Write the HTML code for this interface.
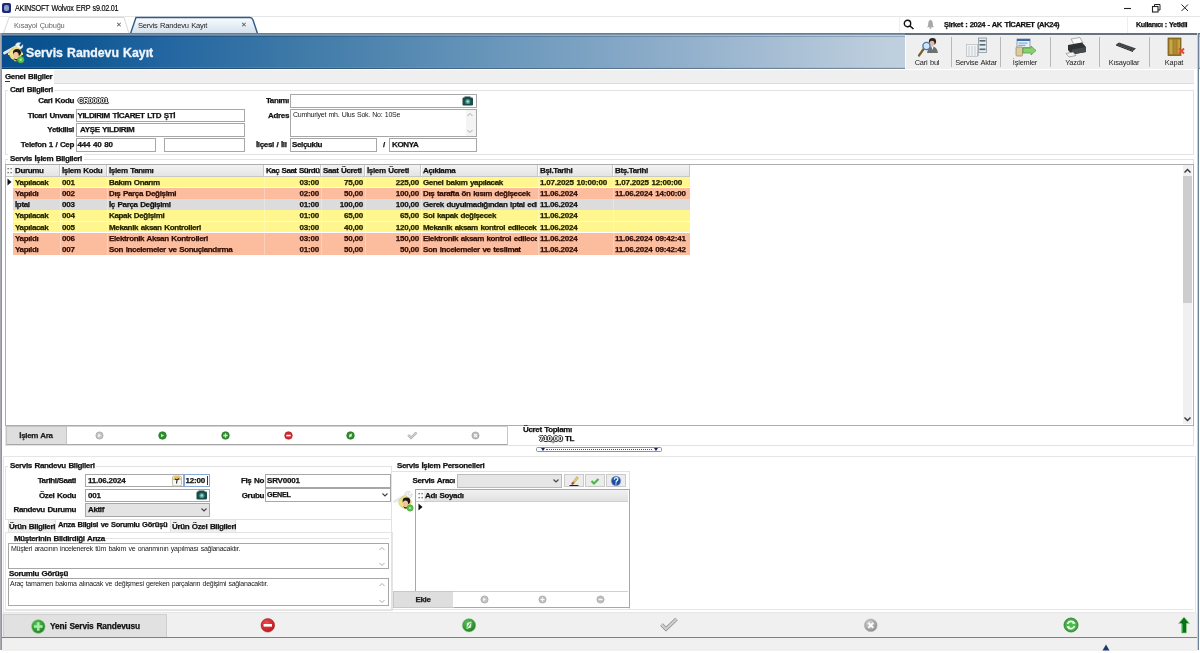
<!DOCTYPE html><html><head><meta charset="utf-8"><style>
html,body{margin:0;padding:0;width:1200px;height:653px;overflow:hidden;background:#fff;}
body{position:relative;font-family:"Liberation Sans", sans-serif;}
#root{position:absolute;left:0;top:0;width:1200px;height:653px;will-change:transform;}
.t{position:absolute;white-space:nowrap;font-weight:bold;letter-spacing:-0.35px;-webkit-text-stroke:0.25px currentColor;word-spacing:0.7px;}
div{box-sizing:content-box;}
</style></head><body><div id="root">
<div style="position:absolute;left:0px;top:0px;width:1200px;height:16px;background:#fff;"></div>
<div style="position:absolute;left:2px;top:3px;width:9px;height:10px;background:#1c2a6e;border-radius:2px;"></div>
<div style="position:absolute;left:4px;top:5px;width:5px;height:6px;background:#8c9ad0;border-radius:2px;"></div>
<div class="t" style="left:14.5px;top:2.9000000000000004px;height:12px;line-height:12px;font-size:8.2px;color:#000;font-weight:normal;-webkit-text-stroke:0;letter-spacing:-0.25px;transform:scaleX(0.88);transform-origin:0 0;-webkit-text-stroke:0.15px #000;">AKINSOFT Wolvox ERP s9.02.01</div>
<svg style="position:absolute;left:1120px;top:2px" width="75" height="12"><line x1="4" y1="6.5" x2="11" y2="6.5" stroke="#222" stroke-width="1.1"/><rect x="32.5" y="4.5" width="5.5" height="5.5" fill="none" stroke="#222" stroke-width="1.1"/><path d="M34.5 4.5 V2.5 H40 V8 H38" fill="none" stroke="#222" stroke-width="1"/><path d="M61.5 2.5 L68 9 M68 2.5 L61.5 9" stroke="#222" stroke-width="1"/></svg>
<div style="position:absolute;left:0px;top:16px;width:1200px;height:17px;background:#fff;"></div>
<div style="position:absolute;left:0px;top:16px;width:1200px;height:1px;background:#e6e6e6;"></div>
<svg style="position:absolute;left:0;top:16px" width="270" height="18"><path d="M3.5 17.5 L9 1.5 L124 1.5 L129 17.5" fill="#fff" stroke="#d8d8d8"/><defs><linearGradient id="tabg" x1="0" y1="0" x2="0" y2="1"><stop offset="0" stop-color="#fafcfe"/><stop offset="1" stop-color="#d4e0ec"/></linearGradient></defs><path d="M130.5 17.5 L136 1.5 L250 1.5 Q252 1.5 253 4 L257.5 17.5" fill="url(#tabg)" stroke="#2f5b86" stroke-width="1.4"/></svg>
<div class="t" style="left:13.5px;top:19.9px;height:12px;line-height:12px;font-size:8px;color:#666;font-weight:normal;-webkit-text-stroke:0;letter-spacing:-0.2px;transform:scaleX(0.93);transform-origin:0 0;">Kısayol Çubuğu</div>
<div class="t" style="left:19px;width:200px;text-align:center;top:19.4px;height:12px;line-height:12px;font-size:7px;color:#444;font-weight:normal;-webkit-text-stroke:0;">&#10005;</div>
<div class="t" style="left:138px;top:19.9px;height:12px;line-height:12px;font-size:8px;color:#222;font-weight:normal;-webkit-text-stroke:0;letter-spacing:-0.25px;transform:scaleX(0.944);transform-origin:0 0;">Servis Randevu Kayıt</div>
<div class="t" style="left:144px;width:200px;text-align:center;top:19.4px;height:12px;line-height:12px;font-size:7px;color:#444;font-weight:normal;-webkit-text-stroke:0;">&#10005;</div>
<div style="position:absolute;left:899px;top:17px;width:1px;height:16px;background:#eee;"></div>
<svg style="position:absolute;left:903px;top:19px" width="13" height="11"><circle cx="4.5" cy="4.5" r="3.2" fill="none" stroke="#111" stroke-width="1.4"/><line x1="7" y1="7" x2="10.5" y2="10" stroke="#111" stroke-width="1.6"/></svg>
<svg style="position:absolute;left:926px;top:19px" width="9" height="10"><path d="M4.5 0.8 Q6.8 1.5 6.8 4.5 L7 7 L8.2 8.2 L0.8 8.2 L2 7 L2.2 4.5 Q2.2 1.5 4.5 0.8Z" fill="#a8a8a8"/><circle cx="4.5" cy="9" r="0.9" fill="#a8a8a8"/></svg>
<div class="t" style="left:944px;top:18.9px;height:12px;line-height:12px;font-size:7.6px;color:#111;letter-spacing:-0.39px;">Şirket : 2024 - AK TİCARET (AK24)</div>
<div style="position:absolute;left:1127px;top:17px;width:1px;height:16px;background:#eee;"></div>
<div class="t" style="left:1136px;top:18.9px;height:12px;line-height:12px;font-size:7.2px;color:#111;letter-spacing:-0.38px;">Kullanıcı : Yetkili</div>
<div style="position:absolute;left:0px;top:33px;width:1200px;height:1px;background:#6a7d90;"></div>
<div style="position:absolute;left:0px;top:34px;width:1200px;height:1px;background:#7893ac;"></div>
<div style="position:absolute;left:0px;top:35px;width:1200px;height:34px;background:linear-gradient(to right,#084e8e 0px,#0c5590 62px,#2265a0 160px,#3f7aa8 300px,#6a97bb 500px,#95b2cd 700px,#bdcedd 882px,#c0d0df 905px);"></div>
<div style="position:absolute;left:0px;top:35px;width:1200px;height:1px;background:rgba(200,220,240,0.25);"></div>
<div style="position:absolute;left:0px;top:36px;width:1200px;height:1px;background:rgba(0,10,40,0.2);"></div>
<div style="position:absolute;left:0px;top:67px;width:1200px;height:1px;background:rgba(150,160,170,0.25);"></div>
<div style="position:absolute;left:0px;top:68px;width:1200px;height:1px;background:rgba(20,40,60,0.4);"></div>
<svg style="position:absolute;left:3px;top:42px" width="24" height="23"><path d="M1.5 11 L15 3.5" stroke="#e4eaee" stroke-width="2.8" stroke-linecap="round"/>
<path d="M12.5 2.5 Q14 -0.5 18 0.8 L16 3.2 L17.5 4.8 L19.8 2.5 Q20.8 5.8 18 7 Q15.5 7.5 13.5 6 Z" fill="#eef2f4" stroke="#a8b4bc" stroke-width="0.4"/>
<circle cx="12.5" cy="11.8" r="6.2" fill="#efe08a" stroke="#c8b050" stroke-width="0.5"/>
<g fill="#efe08a"><rect x="11.3" y="4.4" width="2.4" height="2.4"/><rect x="5" y="10.6" width="2.4" height="2.4"/><rect x="17.6" y="10.6" width="2.4" height="2.4"/><rect x="11.3" y="16.8" width="2.4" height="2.4"/></g>
<ellipse cx="14" cy="10.5" rx="4" ry="3.6" fill="#1e1812"/>
<ellipse cx="13" cy="13" rx="2.7" ry="3.1" fill="#f0c4a0"/>
<path d="M10.5 15.5 Q12 18 15 16.5 L14 18.5 Q11.5 19 10.5 15.5Z" fill="#2a2018"/>
<circle cx="17.8" cy="17.8" r="3.3" fill="#56c04a" stroke="#3a9a30" stroke-width="0.5"/><circle cx="17.8" cy="17.8" r="1.2" fill="#a8e89a"/></svg>
<div class="t" style="left:26px;top:46.9px;height:12px;line-height:12px;font-size:12.3px;color:#f0f6ff;letter-spacing:0;-webkit-text-stroke:0.3px #f0f6ff;">Servis Randevu Kayıt</div>
<div style="position:absolute;left:905px;top:35px;width:292px;height:34px;background:#efefef;"></div>
<div style="position:absolute;left:905px;top:33px;width:293px;height:2px;background:#66727f;"></div>
<div style="position:absolute;left:905px;top:35px;width:1px;height:34px;background:#fafafa;"></div>
<div style="position:absolute;left:951px;top:37px;width:1px;height:30px;background:#b9b9b9;"></div>
<div style="position:absolute;left:1000px;top:37px;width:1px;height:30px;background:#b9b9b9;"></div>
<div style="position:absolute;left:1050px;top:37px;width:1px;height:30px;background:#b9b9b9;"></div>
<div style="position:absolute;left:1099px;top:37px;width:1px;height:30px;background:#b9b9b9;"></div>
<div style="position:absolute;left:1149px;top:37px;width:1px;height:30px;background:#b9b9b9;"></div>
<div class="t" style="left:827px;width:200px;text-align:center;top:56.9px;height:12px;line-height:12px;font-size:7.4px;color:#222;font-weight:normal;-webkit-text-stroke:0;letter-spacing:-0.2px;">Cari bul</div>
<div class="t" style="left:876px;width:200px;text-align:center;top:56.9px;height:12px;line-height:12px;font-size:7.4px;color:#222;font-weight:normal;-webkit-text-stroke:0;letter-spacing:-0.2px;">Servise Aktar</div>
<div class="t" style="left:925px;width:200px;text-align:center;top:56.9px;height:12px;line-height:12px;font-size:7.4px;color:#222;font-weight:normal;-webkit-text-stroke:0;letter-spacing:-0.2px;">İşlemler</div>
<div class="t" style="left:975px;width:200px;text-align:center;top:56.9px;height:12px;line-height:12px;font-size:7.4px;color:#222;font-weight:normal;-webkit-text-stroke:0;letter-spacing:-0.2px;">Yazdır</div>
<div class="t" style="left:1024px;width:200px;text-align:center;top:56.9px;height:12px;line-height:12px;font-size:7.4px;color:#222;font-weight:normal;-webkit-text-stroke:0;letter-spacing:-0.2px;">Kısayollar</div>
<div class="t" style="left:1074px;width:200px;text-align:center;top:56.9px;height:12px;line-height:12px;font-size:7.4px;color:#222;font-weight:normal;-webkit-text-stroke:0;letter-spacing:-0.2px;">Kapat</div>
<svg style="position:absolute;left:913px;top:36px" width="26" height="22"><ellipse cx="19.5" cy="5.5" rx="3.6" ry="3.4" fill="#2a241e"/><ellipse cx="19" cy="7.3" rx="2.4" ry="2.6" fill="#e9b9a0"/>
<path d="M14 17 Q15 10.5 19.5 10.5 Q24 10.5 25 17 Z" fill="#6d716f"/><path d="M18.5 10.8 L19.5 14 L20.5 10.8Z" fill="#fff"/>
<line x1="11" y1="12.5" x2="6" y2="19.5" stroke="#7a6030" stroke-width="2.2" stroke-linecap="round"/>
<circle cx="13.5" cy="10" r="3.6" fill="#cfe4f4" stroke="#4a7ab0" stroke-width="1.4"/></svg>
<svg style="position:absolute;left:963px;top:36px" width="26" height="22"><rect x="3.5" y="8.5" width="11" height="12" fill="#f0f2f4" stroke="#b8c0c8" stroke-width="0.8"/>
<line x1="6" y1="10" x2="6" y2="20" stroke="#c8ccd0"/><line x1="9" y1="10" x2="9" y2="20" stroke="#c8ccd0"/><line x1="12" y1="10" x2="12" y2="20" stroke="#c8ccd0"/>
<rect x="15.5" y="2" width="8" height="14.5" fill="#e4eaee" stroke="#8a969e" stroke-width="0.8"/>
<rect x="16.5" y="4" width="6" height="1.6" fill="#5a6a70"/><rect x="16.5" y="8" width="6" height="1.6" fill="#5a6a70"/><rect x="16.5" y="12.5" width="6" height="1.6" fill="#5a6a70"/>
<line x1="15" y1="16" x2="15" y2="20" stroke="#98a0a8"/></svg>
<svg style="position:absolute;left:1013px;top:36px" width="26" height="22"><rect x="4" y="3" width="13" height="8.5" fill="#e6f0f8" stroke="#7890a8" stroke-width="0.8"/><rect x="4" y="3" width="13" height="2" fill="#3a6ab0"/>
<rect x="5.5" y="6.5" width="9" height="1.2" fill="#8aa8c8"/><rect x="5.5" y="8.8" width="7" height="1.2" fill="#8aa8c8"/>
<rect x="3" y="11" width="6.5" height="9" rx="1" fill="#d8cca0" stroke="#a09060" stroke-width="0.8"/>
<path d="M10 12 L18 12 L18 10 L23 14.5 L18 19 L18 17 L10 17 Z" fill="#8ad070" stroke="#4a9a40" stroke-width="0.7"/></svg>
<svg style="position:absolute;left:1063px;top:36px" width="26" height="22"><path d="M8 3 L17 1.5 L20 7 L11 8.5 Z" fill="#fafafa" stroke="#909090" stroke-width="0.7"/>
<path d="M5 9 L19 6.5 L23 11 L23 16 L9 18.5 L5 14 Z" fill="#2e3236"/><path d="M9 13.5 L23 11 L23 16 L9 18.5Z" fill="#45494e"/>
<path d="M3 17.5 L10 16 L13 19.5 L6 21 Z" fill="#f4f4f4" stroke="#777" stroke-width="0.6"/></svg>
<svg style="position:absolute;left:1112px;top:36px" width="26" height="22"><path d="M4 8.5 L7 6.5 L24 12.5 L21 15 Z" fill="#3c3e42"/><path d="M4 8.5 L21 15 L21 16 L4 9.6Z" fill="#1a1a1c"/>
<path d="M7 8 L21 13" stroke="#6a6e72" stroke-width="0.6" stroke-dasharray="1 1"/></svg>
<svg style="position:absolute;left:1162px;top:36px" width="26" height="22"><rect x="6" y="2" width="13" height="17.5" fill="#9a7a2a" stroke="#6a5010" stroke-width="0.7"/>
<rect x="7.5" y="3.5" width="3" height="14.5" fill="#c8a848"/><rect x="11.5" y="3.5" width="3" height="14.5" fill="#b08a30"/><rect x="15.5" y="3.5" width="2.5" height="14.5" fill="#c8a040"/>
<path d="M17 12.5 L22 17.5 M22 12.5 L17 17.5" stroke="#e04a30" stroke-width="1.8"/></svg>
<div style="position:absolute;left:2px;top:69px;width:1195px;height:584px;background:#fff;"></div>
<div style="position:absolute;left:54px;top:70px;width:1140px;height:13px;background:#efefef;border-bottom:1px solid #dcdcdc;"></div>
<div class="t" style="left:5px;top:71.4px;height:12px;line-height:12px;font-size:8px;color:#111;">Genel Bilgiler</div>
<div style="position:absolute;left:5px;top:80.5px;width:5px;height:0.7px;background:#333;"></div>
<div style="position:absolute;left:5px;top:90px;width:1187px;height:63px;border:1px solid #e2e2e2;"></div>
<div style="position:absolute;left:8px;top:85px;width:46px;height:10px;background:#fff;"></div>
<div class="t" style="left:10px;top:84.4px;height:12px;line-height:12px;font-size:8px;color:#111;">Cari Bilgileri</div>
<div class="t" style="right:1126px;top:95.4px;height:12px;line-height:12px;font-size:8px;color:#111;">Cari Kodu</div>
<div class="t" style="left:78px;top:94.9px;height:12px;line-height:12px;font-size:7.6px;color:#fff;-webkit-text-stroke:0;text-shadow:1px 0 0 #333,-1px 0 0 #333,0 1px 0 #333,0 -1px 0 #333,1px 1px 1px #666;letter-spacing:-0.3px;">CR00001</div>
<div class="t" style="right:1126px;top:109.9px;height:12px;line-height:12px;font-size:8px;color:#111;">Ticari Unvanı</div>
<div style="position:absolute;left:76px;top:109px;width:167px;height:11px;background:#fff;border:1px solid #a7a7a7;"></div>
<div class="t" style="left:77.5px;top:109.9px;height:12px;line-height:12px;font-size:8px;color:#111;">YILDIRIM TİCARET LTD ŞTİ</div>
<div class="t" style="right:1126px;top:124.4px;height:12px;line-height:12px;font-size:8px;color:#111;">Yetkilisi</div>
<div style="position:absolute;left:76px;top:123px;width:167px;height:12px;background:#fff;border:1px solid #a7a7a7;"></div>
<div class="t" style="left:80px;top:123.9px;height:12px;line-height:12px;font-size:8px;color:#111;">AYŞE YILDIRIM</div>
<div class="t" style="right:1126px;top:139.4px;height:12px;line-height:12px;font-size:8px;color:#111;">Telefon 1 / Cep</div>
<div style="position:absolute;left:76px;top:138px;width:78px;height:12px;background:#fff;border:1px solid #a7a7a7;"></div>
<div class="t" style="left:77.5px;top:138.9px;height:12px;line-height:12px;font-size:8px;color:#111;letter-spacing:-0.2px;">444 40 80</div>
<div style="position:absolute;left:164px;top:138px;width:79px;height:12px;background:#fff;border:1px solid #a7a7a7;"></div>
<div class="t" style="right:911px;top:95.4px;height:12px;line-height:12px;font-size:8px;color:#111;">Tanımı</div>
<div style="position:absolute;left:290px;top:94px;width:185px;height:12px;background:#fff;border:1px solid #a7a7a7;"></div>
<svg style="position:absolute;left:462px;top:96px" width="12" height="10"><rect x="0.5" y="1.5" width="10.5" height="8" rx="1.2" fill="#1e4a48"/><rect x="2.5" y="0.5" width="6" height="2" fill="#1e4a48"/><circle cx="5.8" cy="5.5" r="2.6" fill="#3a9a90"/><circle cx="5.8" cy="5.5" r="1.3" fill="#9ad8d0"/></svg>
<div class="t" style="right:911px;top:110.4px;height:12px;line-height:12px;font-size:8px;color:#111;">Adres</div>
<div style="position:absolute;left:290px;top:109px;width:185px;height:26px;background:#fff;border:1px solid #a7a7a7;"></div>
<div class="t" style="left:293px;top:109.4px;height:12px;line-height:12px;font-size:7px;color:#1a1a1a;font-weight:normal;-webkit-text-stroke:0;letter-spacing:-0.27px;">Cumhuriyet mh. Ulus Sok. No: 10Se</div>
<div style="position:absolute;left:466px;top:110px;width:10px;height:26px;background:#f4f4f4;"></div>
<svg style="position:absolute;left:465px;top:111px" width="10" height="25"><path d="M2.5 5 L5 2.5 L7.5 5" fill="none" stroke="#aaa"/><path d="M2.5 19 L5 21.5 L7.5 19" fill="none" stroke="#aaa"/></svg>
<div class="t" style="right:911px;top:139.4px;height:12px;line-height:12px;font-size:8px;color:#111;width:33px;overflow:hidden;">İlçesi / İli</div>
<div style="position:absolute;left:290px;top:138px;width:85px;height:12px;background:#fff;border:1px solid #a7a7a7;"></div>
<div class="t" style="left:292px;top:138.9px;height:12px;line-height:12px;font-size:8px;color:#111;">Selçuklu</div>
<div class="t" style="left:383px;top:139.4px;height:12px;line-height:12px;font-size:8px;color:#111;">/</div>
<div style="position:absolute;left:389px;top:138px;width:86px;height:12px;background:#fff;border:1px solid #a7a7a7;"></div>
<div class="t" style="left:392px;top:138.9px;height:12px;line-height:12px;font-size:8px;color:#111;">KONYA</div>
<div style="position:absolute;left:5px;top:159px;width:1187px;height:285px;border:1px solid #e2e2e2;"></div>
<div style="position:absolute;left:8px;top:154px;width:76px;height:10px;background:#fff;"></div>
<div class="t" style="left:10px;top:153.4px;height:12px;line-height:12px;font-size:8px;color:#111;">Servis İşlem Bilgileri</div>
<div style="position:absolute;left:5px;top:164px;width:1187px;height:260px;border:1px solid #adadad;background:#fff;"></div>
<div style="position:absolute;left:6px;top:165px;width:684px;height:11px;background:linear-gradient(#f3f3f3,#e4e4e4);border-bottom:1px solid #c8c8c8;"></div>
<div style="position:absolute;left:264px;top:165px;width:57px;height:11px;background:#fbfbfb;"></div>
<div style="position:absolute;left:59px;top:165px;width:1px;height:11px;background:#c8c8c8;"></div>
<div style="position:absolute;left:60px;top:165px;width:1px;height:11px;background:#fff;"></div>
<div style="position:absolute;left:106px;top:165px;width:1px;height:11px;background:#c8c8c8;"></div>
<div style="position:absolute;left:107px;top:165px;width:1px;height:11px;background:#fff;"></div>
<div style="position:absolute;left:263px;top:165px;width:1px;height:11px;background:#c8c8c8;"></div>
<div style="position:absolute;left:264px;top:165px;width:1px;height:11px;background:#fff;"></div>
<div style="position:absolute;left:320px;top:165px;width:1px;height:11px;background:#c8c8c8;"></div>
<div style="position:absolute;left:321px;top:165px;width:1px;height:11px;background:#fff;"></div>
<div style="position:absolute;left:364px;top:165px;width:1px;height:11px;background:#c8c8c8;"></div>
<div style="position:absolute;left:365px;top:165px;width:1px;height:11px;background:#fff;"></div>
<div style="position:absolute;left:420px;top:165px;width:1px;height:11px;background:#c8c8c8;"></div>
<div style="position:absolute;left:421px;top:165px;width:1px;height:11px;background:#fff;"></div>
<div style="position:absolute;left:537px;top:165px;width:1px;height:11px;background:#c8c8c8;"></div>
<div style="position:absolute;left:538px;top:165px;width:1px;height:11px;background:#fff;"></div>
<div style="position:absolute;left:612px;top:165px;width:1px;height:11px;background:#c8c8c8;"></div>
<div style="position:absolute;left:613px;top:165px;width:1px;height:11px;background:#fff;"></div>
<div style="position:absolute;left:689px;top:165px;width:1px;height:11px;background:#c8c8c8;"></div>
<div style="position:absolute;left:690px;top:165px;width:1px;height:11px;background:#fff;"></div>
<div style="position:absolute;left:6px;top:165px;width:7px;height:11px;background:#fafafa;"></div>
<svg style="position:absolute;left:7px;top:166.5px" width="6" height="8"><g fill="#666"><rect x="0.5" y="1" width="1.3" height="1.3"/><rect x="3.5" y="1" width="1.3" height="1.3"/><rect x="0.5" y="5" width="1.3" height="1.3"/><rect x="3.5" y="5" width="1.3" height="1.3"/></g></svg>
<div class="t" style="left:15px;top:164.9px;height:12px;line-height:12px;font-size:8px;color:#111;">Durumu</div>
<div class="t" style="left:62px;top:164.9px;height:12px;line-height:12px;font-size:8px;color:#111;">İşlem Kodu</div>
<div class="t" style="left:109px;top:164.9px;height:12px;line-height:12px;font-size:8px;color:#111;">İşlem Tanımı</div>
<div class="t" style="left:266px;top:164.9px;height:12px;line-height:12px;font-size:8px;color:#111;letter-spacing:-0.5px;">Kaç Saat Sürdü</div>
<div class="t" style="left:323px;top:164.9px;height:12px;line-height:12px;font-size:8px;color:#111;">Saat Ücreti</div>
<div class="t" style="left:367px;top:164.9px;height:12px;line-height:12px;font-size:8px;color:#111;">İşlem Ücreti</div>
<div class="t" style="left:423px;top:164.9px;height:12px;line-height:12px;font-size:8px;color:#111;">Açıklama</div>
<div class="t" style="left:540px;top:164.9px;height:12px;line-height:12px;font-size:8px;color:#111;">Bşl.Tarihi</div>
<div class="t" style="left:615px;top:164.9px;height:12px;line-height:12px;font-size:8px;color:#111;">Btş.Tarihi</div>
<div style="position:absolute;left:13px;top:176.5px;width:677px;height:10.75px;background:#fff68d;"></div>
<div style="position:absolute;left:60px;top:176.5px;width:1px;height:11.25px;background:rgba(255,255,255,0.3);"></div>
<div style="position:absolute;left:107px;top:176.5px;width:1px;height:11.25px;background:rgba(255,255,255,0.3);"></div>
<div style="position:absolute;left:264px;top:176.5px;width:1px;height:11.25px;background:rgba(255,255,255,0.3);"></div>
<div style="position:absolute;left:321px;top:176.5px;width:1px;height:11.25px;background:rgba(255,255,255,0.3);"></div>
<div style="position:absolute;left:365px;top:176.5px;width:1px;height:11.25px;background:rgba(255,255,255,0.3);"></div>
<div style="position:absolute;left:421px;top:176.5px;width:1px;height:11.25px;background:rgba(255,255,255,0.3);"></div>
<div style="position:absolute;left:538px;top:176.5px;width:1px;height:11.25px;background:rgba(255,255,255,0.3);"></div>
<div style="position:absolute;left:613px;top:176.5px;width:1px;height:11.25px;background:rgba(255,255,255,0.3);"></div>
<div class="t" style="left:15px;top:176.525px;width:44px;overflow:hidden;height:12px;line-height:12px;font-size:8px;color:#222000;">Yapılacak</div>
<div class="t" style="left:62px;top:176.525px;width:44px;overflow:hidden;height:12px;line-height:12px;font-size:8px;color:#222000;letter-spacing:-0.2px;">001</div>
<div class="t" style="left:109px;top:176.525px;width:154px;overflow:hidden;height:12px;line-height:12px;font-size:8px;color:#222000;">Bakım Onarım</div>
<div class="t" style="right:881px;top:176.525px;height:12px;line-height:12px;font-size:8px;color:#222000;letter-spacing:-0.2px;">03:00</div>
<div class="t" style="right:837px;top:176.525px;height:12px;line-height:12px;font-size:8px;color:#222000;letter-spacing:-0.2px;">75,00</div>
<div class="t" style="right:781px;top:176.525px;height:12px;line-height:12px;font-size:8px;color:#222000;letter-spacing:-0.2px;">225,00</div>
<div class="t" style="left:423px;top:176.525px;width:114px;overflow:hidden;height:12px;line-height:12px;font-size:8px;color:#222000;">Genel bakım yapılacak</div>
<div class="t" style="left:540px;top:176.525px;width:72px;overflow:hidden;height:12px;line-height:12px;font-size:8px;color:#222000;letter-spacing:-0.2px;">1.07.2025 10:00:00</div>
<div class="t" style="left:615px;top:176.525px;width:74px;overflow:hidden;height:12px;line-height:12px;font-size:8px;color:#222000;letter-spacing:-0.2px;">1.07.2025 12:00:00</div>
<div style="position:absolute;left:13px;top:187.75px;width:677px;height:10.75px;background:#fbbd9e;"></div>
<div style="position:absolute;left:60px;top:187.75px;width:1px;height:11.25px;background:rgba(255,255,255,0.3);"></div>
<div style="position:absolute;left:107px;top:187.75px;width:1px;height:11.25px;background:rgba(255,255,255,0.3);"></div>
<div style="position:absolute;left:264px;top:187.75px;width:1px;height:11.25px;background:rgba(255,255,255,0.3);"></div>
<div style="position:absolute;left:321px;top:187.75px;width:1px;height:11.25px;background:rgba(255,255,255,0.3);"></div>
<div style="position:absolute;left:365px;top:187.75px;width:1px;height:11.25px;background:rgba(255,255,255,0.3);"></div>
<div style="position:absolute;left:421px;top:187.75px;width:1px;height:11.25px;background:rgba(255,255,255,0.3);"></div>
<div style="position:absolute;left:538px;top:187.75px;width:1px;height:11.25px;background:rgba(255,255,255,0.3);"></div>
<div style="position:absolute;left:613px;top:187.75px;width:1px;height:11.25px;background:rgba(255,255,255,0.3);"></div>
<div class="t" style="left:15px;top:187.775px;width:44px;overflow:hidden;height:12px;line-height:12px;font-size:8px;color:#2e0c04;">Yapıldı</div>
<div class="t" style="left:62px;top:187.775px;width:44px;overflow:hidden;height:12px;line-height:12px;font-size:8px;color:#2e0c04;letter-spacing:-0.2px;">002</div>
<div class="t" style="left:109px;top:187.775px;width:154px;overflow:hidden;height:12px;line-height:12px;font-size:8px;color:#2e0c04;">Dış Parça Değişimi</div>
<div class="t" style="right:881px;top:187.775px;height:12px;line-height:12px;font-size:8px;color:#2e0c04;letter-spacing:-0.2px;">02:00</div>
<div class="t" style="right:837px;top:187.775px;height:12px;line-height:12px;font-size:8px;color:#2e0c04;letter-spacing:-0.2px;">50,00</div>
<div class="t" style="right:781px;top:187.775px;height:12px;line-height:12px;font-size:8px;color:#2e0c04;letter-spacing:-0.2px;">100,00</div>
<div class="t" style="left:423px;top:187.775px;width:114px;overflow:hidden;height:12px;line-height:12px;font-size:8px;color:#2e0c04;">Dış tarafta ön kısım değişecek</div>
<div class="t" style="left:540px;top:187.775px;width:72px;overflow:hidden;height:12px;line-height:12px;font-size:8px;color:#2e0c04;letter-spacing:-0.2px;">11.06.2024</div>
<div class="t" style="left:615px;top:187.775px;width:74px;overflow:hidden;height:12px;line-height:12px;font-size:8px;color:#2e0c04;letter-spacing:-0.2px;">11.06.2024 14:00:00</div>
<div style="position:absolute;left:13px;top:199.0px;width:677px;height:10.75px;background:#dcdcdd;"></div>
<div style="position:absolute;left:60px;top:199.0px;width:1px;height:11.25px;background:rgba(255,255,255,0.3);"></div>
<div style="position:absolute;left:107px;top:199.0px;width:1px;height:11.25px;background:rgba(255,255,255,0.3);"></div>
<div style="position:absolute;left:264px;top:199.0px;width:1px;height:11.25px;background:rgba(255,255,255,0.3);"></div>
<div style="position:absolute;left:321px;top:199.0px;width:1px;height:11.25px;background:rgba(255,255,255,0.3);"></div>
<div style="position:absolute;left:365px;top:199.0px;width:1px;height:11.25px;background:rgba(255,255,255,0.3);"></div>
<div style="position:absolute;left:421px;top:199.0px;width:1px;height:11.25px;background:rgba(255,255,255,0.3);"></div>
<div style="position:absolute;left:538px;top:199.0px;width:1px;height:11.25px;background:rgba(255,255,255,0.3);"></div>
<div style="position:absolute;left:613px;top:199.0px;width:1px;height:11.25px;background:rgba(255,255,255,0.3);"></div>
<div class="t" style="left:15px;top:199.025px;width:44px;overflow:hidden;height:12px;line-height:12px;font-size:8px;color:#111;">İptal</div>
<div class="t" style="left:62px;top:199.025px;width:44px;overflow:hidden;height:12px;line-height:12px;font-size:8px;color:#111;letter-spacing:-0.2px;">003</div>
<div class="t" style="left:109px;top:199.025px;width:154px;overflow:hidden;height:12px;line-height:12px;font-size:8px;color:#111;">İç Parça Değişimi</div>
<div class="t" style="right:881px;top:199.025px;height:12px;line-height:12px;font-size:8px;color:#111;letter-spacing:-0.2px;">01:00</div>
<div class="t" style="right:837px;top:199.025px;height:12px;line-height:12px;font-size:8px;color:#111;letter-spacing:-0.2px;">100,00</div>
<div class="t" style="right:781px;top:199.025px;height:12px;line-height:12px;font-size:8px;color:#111;letter-spacing:-0.2px;">100,00</div>
<div class="t" style="left:423px;top:199.025px;width:114px;overflow:hidden;height:12px;line-height:12px;font-size:8px;color:#111;">Gerek duyulmadığından iptal edi</div>
<div class="t" style="left:540px;top:199.025px;width:72px;overflow:hidden;height:12px;line-height:12px;font-size:8px;color:#111;letter-spacing:-0.2px;">11.06.2024</div>
<div style="position:absolute;left:13px;top:210.25px;width:677px;height:10.75px;background:#fff68d;"></div>
<div style="position:absolute;left:60px;top:210.25px;width:1px;height:11.25px;background:rgba(255,255,255,0.3);"></div>
<div style="position:absolute;left:107px;top:210.25px;width:1px;height:11.25px;background:rgba(255,255,255,0.3);"></div>
<div style="position:absolute;left:264px;top:210.25px;width:1px;height:11.25px;background:rgba(255,255,255,0.3);"></div>
<div style="position:absolute;left:321px;top:210.25px;width:1px;height:11.25px;background:rgba(255,255,255,0.3);"></div>
<div style="position:absolute;left:365px;top:210.25px;width:1px;height:11.25px;background:rgba(255,255,255,0.3);"></div>
<div style="position:absolute;left:421px;top:210.25px;width:1px;height:11.25px;background:rgba(255,255,255,0.3);"></div>
<div style="position:absolute;left:538px;top:210.25px;width:1px;height:11.25px;background:rgba(255,255,255,0.3);"></div>
<div style="position:absolute;left:613px;top:210.25px;width:1px;height:11.25px;background:rgba(255,255,255,0.3);"></div>
<div class="t" style="left:15px;top:210.275px;width:44px;overflow:hidden;height:12px;line-height:12px;font-size:8px;color:#222000;">Yapılacak</div>
<div class="t" style="left:62px;top:210.275px;width:44px;overflow:hidden;height:12px;line-height:12px;font-size:8px;color:#222000;letter-spacing:-0.2px;">004</div>
<div class="t" style="left:109px;top:210.275px;width:154px;overflow:hidden;height:12px;line-height:12px;font-size:8px;color:#222000;">Kapak Değişimi</div>
<div class="t" style="right:881px;top:210.275px;height:12px;line-height:12px;font-size:8px;color:#222000;letter-spacing:-0.2px;">01:00</div>
<div class="t" style="right:837px;top:210.275px;height:12px;line-height:12px;font-size:8px;color:#222000;letter-spacing:-0.2px;">65,00</div>
<div class="t" style="right:781px;top:210.275px;height:12px;line-height:12px;font-size:8px;color:#222000;letter-spacing:-0.2px;">65,00</div>
<div class="t" style="left:423px;top:210.275px;width:114px;overflow:hidden;height:12px;line-height:12px;font-size:8px;color:#222000;">Sol kapak değişecek</div>
<div class="t" style="left:540px;top:210.275px;width:72px;overflow:hidden;height:12px;line-height:12px;font-size:8px;color:#222000;letter-spacing:-0.2px;">11.06.2024</div>
<div style="position:absolute;left:13px;top:221.5px;width:677px;height:10.75px;background:#fff68d;"></div>
<div style="position:absolute;left:60px;top:221.5px;width:1px;height:11.25px;background:rgba(255,255,255,0.3);"></div>
<div style="position:absolute;left:107px;top:221.5px;width:1px;height:11.25px;background:rgba(255,255,255,0.3);"></div>
<div style="position:absolute;left:264px;top:221.5px;width:1px;height:11.25px;background:rgba(255,255,255,0.3);"></div>
<div style="position:absolute;left:321px;top:221.5px;width:1px;height:11.25px;background:rgba(255,255,255,0.3);"></div>
<div style="position:absolute;left:365px;top:221.5px;width:1px;height:11.25px;background:rgba(255,255,255,0.3);"></div>
<div style="position:absolute;left:421px;top:221.5px;width:1px;height:11.25px;background:rgba(255,255,255,0.3);"></div>
<div style="position:absolute;left:538px;top:221.5px;width:1px;height:11.25px;background:rgba(255,255,255,0.3);"></div>
<div style="position:absolute;left:613px;top:221.5px;width:1px;height:11.25px;background:rgba(255,255,255,0.3);"></div>
<div class="t" style="left:15px;top:221.525px;width:44px;overflow:hidden;height:12px;line-height:12px;font-size:8px;color:#222000;">Yapılacak</div>
<div class="t" style="left:62px;top:221.525px;width:44px;overflow:hidden;height:12px;line-height:12px;font-size:8px;color:#222000;letter-spacing:-0.2px;">005</div>
<div class="t" style="left:109px;top:221.525px;width:154px;overflow:hidden;height:12px;line-height:12px;font-size:8px;color:#222000;">Mekanik aksan Kontrolleri</div>
<div class="t" style="right:881px;top:221.525px;height:12px;line-height:12px;font-size:8px;color:#222000;letter-spacing:-0.2px;">03:00</div>
<div class="t" style="right:837px;top:221.525px;height:12px;line-height:12px;font-size:8px;color:#222000;letter-spacing:-0.2px;">40,00</div>
<div class="t" style="right:781px;top:221.525px;height:12px;line-height:12px;font-size:8px;color:#222000;letter-spacing:-0.2px;">120,00</div>
<div class="t" style="left:423px;top:221.525px;width:114px;overflow:hidden;height:12px;line-height:12px;font-size:8px;color:#222000;">Mekanik aksam kontrol edilecek</div>
<div class="t" style="left:540px;top:221.525px;width:72px;overflow:hidden;height:12px;line-height:12px;font-size:8px;color:#222000;letter-spacing:-0.2px;">11.06.2024</div>
<div style="position:absolute;left:13px;top:232.75px;width:677px;height:10.75px;background:#fbbd9e;"></div>
<div style="position:absolute;left:60px;top:232.75px;width:1px;height:11.25px;background:rgba(255,255,255,0.3);"></div>
<div style="position:absolute;left:107px;top:232.75px;width:1px;height:11.25px;background:rgba(255,255,255,0.3);"></div>
<div style="position:absolute;left:264px;top:232.75px;width:1px;height:11.25px;background:rgba(255,255,255,0.3);"></div>
<div style="position:absolute;left:321px;top:232.75px;width:1px;height:11.25px;background:rgba(255,255,255,0.3);"></div>
<div style="position:absolute;left:365px;top:232.75px;width:1px;height:11.25px;background:rgba(255,255,255,0.3);"></div>
<div style="position:absolute;left:421px;top:232.75px;width:1px;height:11.25px;background:rgba(255,255,255,0.3);"></div>
<div style="position:absolute;left:538px;top:232.75px;width:1px;height:11.25px;background:rgba(255,255,255,0.3);"></div>
<div style="position:absolute;left:613px;top:232.75px;width:1px;height:11.25px;background:rgba(255,255,255,0.3);"></div>
<div class="t" style="left:15px;top:232.775px;width:44px;overflow:hidden;height:12px;line-height:12px;font-size:8px;color:#2e0c04;">Yapıldı</div>
<div class="t" style="left:62px;top:232.775px;width:44px;overflow:hidden;height:12px;line-height:12px;font-size:8px;color:#2e0c04;letter-spacing:-0.2px;">006</div>
<div class="t" style="left:109px;top:232.775px;width:154px;overflow:hidden;height:12px;line-height:12px;font-size:8px;color:#2e0c04;">Elektronik Aksan Kontrolleri</div>
<div class="t" style="right:881px;top:232.775px;height:12px;line-height:12px;font-size:8px;color:#2e0c04;letter-spacing:-0.2px;">03:00</div>
<div class="t" style="right:837px;top:232.775px;height:12px;line-height:12px;font-size:8px;color:#2e0c04;letter-spacing:-0.2px;">50,00</div>
<div class="t" style="right:781px;top:232.775px;height:12px;line-height:12px;font-size:8px;color:#2e0c04;letter-spacing:-0.2px;">150,00</div>
<div class="t" style="left:423px;top:232.775px;width:114px;overflow:hidden;height:12px;line-height:12px;font-size:8px;color:#2e0c04;">Elektronik aksam kontrol edilecek</div>
<div class="t" style="left:540px;top:232.775px;width:72px;overflow:hidden;height:12px;line-height:12px;font-size:8px;color:#2e0c04;letter-spacing:-0.2px;">11.06.2024</div>
<div class="t" style="left:615px;top:232.775px;width:74px;overflow:hidden;height:12px;line-height:12px;font-size:8px;color:#2e0c04;letter-spacing:-0.2px;">11.06.2024 09:42:41</div>
<div style="position:absolute;left:13px;top:244.0px;width:677px;height:10.75px;background:#fbbd9e;"></div>
<div style="position:absolute;left:60px;top:244.0px;width:1px;height:11.25px;background:rgba(255,255,255,0.3);"></div>
<div style="position:absolute;left:107px;top:244.0px;width:1px;height:11.25px;background:rgba(255,255,255,0.3);"></div>
<div style="position:absolute;left:264px;top:244.0px;width:1px;height:11.25px;background:rgba(255,255,255,0.3);"></div>
<div style="position:absolute;left:321px;top:244.0px;width:1px;height:11.25px;background:rgba(255,255,255,0.3);"></div>
<div style="position:absolute;left:365px;top:244.0px;width:1px;height:11.25px;background:rgba(255,255,255,0.3);"></div>
<div style="position:absolute;left:421px;top:244.0px;width:1px;height:11.25px;background:rgba(255,255,255,0.3);"></div>
<div style="position:absolute;left:538px;top:244.0px;width:1px;height:11.25px;background:rgba(255,255,255,0.3);"></div>
<div style="position:absolute;left:613px;top:244.0px;width:1px;height:11.25px;background:rgba(255,255,255,0.3);"></div>
<div class="t" style="left:15px;top:244.025px;width:44px;overflow:hidden;height:12px;line-height:12px;font-size:8px;color:#2e0c04;">Yapıldı</div>
<div class="t" style="left:62px;top:244.025px;width:44px;overflow:hidden;height:12px;line-height:12px;font-size:8px;color:#2e0c04;letter-spacing:-0.2px;">007</div>
<div class="t" style="left:109px;top:244.025px;width:154px;overflow:hidden;height:12px;line-height:12px;font-size:8px;color:#2e0c04;">Son incelemeler ve Sonuçlandırma</div>
<div class="t" style="right:881px;top:244.025px;height:12px;line-height:12px;font-size:8px;color:#2e0c04;letter-spacing:-0.2px;">01:00</div>
<div class="t" style="right:837px;top:244.025px;height:12px;line-height:12px;font-size:8px;color:#2e0c04;letter-spacing:-0.2px;">50,00</div>
<div class="t" style="right:781px;top:244.025px;height:12px;line-height:12px;font-size:8px;color:#2e0c04;letter-spacing:-0.2px;">50,00</div>
<div class="t" style="left:423px;top:244.025px;width:114px;overflow:hidden;height:12px;line-height:12px;font-size:8px;color:#2e0c04;">Son incelemeler ve teslimat</div>
<div class="t" style="left:540px;top:244.025px;width:72px;overflow:hidden;height:12px;line-height:12px;font-size:8px;color:#2e0c04;letter-spacing:-0.2px;">11.06.2024</div>
<div class="t" style="left:615px;top:244.025px;width:74px;overflow:hidden;height:12px;line-height:12px;font-size:8px;color:#2e0c04;letter-spacing:-0.2px;">11.06.2024 09:42:42</div>
<svg style="position:absolute;left:7px;top:178px" width="5" height="8"><path d="M0.5 0.5 L4.5 4 L0.5 7.5Z" fill="#111"/></svg>
<div style="position:absolute;left:1183px;top:165px;width:9px;height:259px;background:#f0f0f0;"></div>
<div style="position:absolute;left:1183px;top:176px;width:9px;height:127px;background:#cdcdcd;"></div>
<svg style="position:absolute;left:1183px;top:167px" width="9" height="8"><path d="M1.5 5.5 L4.5 2.5 L7.5 5.5" fill="none" stroke="#333" stroke-width="1.4"/></svg>
<svg style="position:absolute;left:1183px;top:415px" width="9" height="8"><path d="M1.5 2.5 L4.5 5.5 L7.5 2.5" fill="none" stroke="#333" stroke-width="1.4"/></svg>
<div style="position:absolute;left:6px;top:426px;width:59px;height:17px;background:#dedede;border:1px solid #c4c4c4;border-bottom-color:#a8a8a8;"></div>
<div class="t" style="left:-64px;width:200px;text-align:center;top:429.9px;height:12px;line-height:12px;font-size:8px;color:#222;">İşlem Ara</div>
<div style="position:absolute;left:67px;top:426px;width:440px;height:17px;background:#fff;border-top:1px solid #d0d0d0;border-bottom:1px solid #a8a8a8;border-right:1px solid #c8c8c8;"></div>
<svg style="position:absolute;left:94.5px;top:430.5px" width="9" height="9"><circle cx="4.5" cy="4.5" r="3.6" fill="#c4c4c4" stroke="#a0a0a0" stroke-width="0.7"/><path d="M3.2 2.8 L6 4.5 L3.2 6.2Z" fill="#fafafa"/></svg>
<svg style="position:absolute;left:157.5px;top:430.5px" width="9" height="9"><circle cx="4.5" cy="4.5" r="3.8" fill="#2e8e2e" stroke="#1e6a1e" stroke-width="0.6"/><path d="M3 2.8 L6.2 4.5 L3 6.2Z" fill="#b8f0b0"/></svg>
<svg style="position:absolute;left:220.5px;top:430.5px" width="9" height="9"><circle cx="4.5" cy="4.5" r="3.8" fill="#2e8e2e" stroke="#1e6a1e" stroke-width="0.6"/><path d="M4.5 2.3 V6.7 M2.3 4.5 H6.7" stroke="#c8f4c0" stroke-width="1.3"/></svg>
<svg style="position:absolute;left:283.5px;top:430.5px" width="9" height="9"><circle cx="4.5" cy="4.5" r="3.8" fill="#d42a34" stroke="#9a1a1a" stroke-width="0.6"/><rect x="2.3" y="3.8" width="4.4" height="1.5" fill="#fff"/></svg>
<svg style="position:absolute;left:345.5px;top:430.5px" width="9" height="9"><circle cx="4.5" cy="4.5" r="3.8" fill="#2e8e2e" stroke="#1e6a1e" stroke-width="0.6"/><path d="M3 6.5 L3.4 3.4 L6 2.5 L5.6 5.6Z" fill="#d8f4d0"/></svg>
<svg style="position:absolute;left:407px;top:431px" width="11" height="9"><path d="M1.2 4 L4 6.8 L9.5 1.5" fill="none" stroke="#9a9a9a" stroke-width="2.4"/><path d="M1.2 4 L4 6.8 L9.5 1.5" fill="none" stroke="#d4d4d4" stroke-width="1.2"/></svg>
<svg style="position:absolute;left:470.5px;top:430.5px" width="9" height="9"><circle cx="4.5" cy="4.5" r="3.6" fill="#b8b8b8" stroke="#a0a0a0" stroke-width="0.6"/><path d="M3 3 L6 6 M6 3 L3 6" stroke="#fafafa" stroke-width="1.1"/></svg>
<div class="t" style="left:523px;top:424.4px;height:12px;line-height:12px;font-size:8px;color:#111;">Ücret Toplamı</div>
<div class="t" style="left:539px;top:433.2px;height:12px;line-height:12px;font-size:8px;color:#fff;-webkit-text-stroke:0;text-shadow:1px 0 0 #333,-1px 0 0 #333,0 1px 0 #333,0 -1px 0 #333,1px 1px 1px #666;letter-spacing:-0.2px;">710,00</div>
<div class="t" style="left:565px;top:433.2px;height:12px;line-height:12px;font-size:8px;color:#111;">TL</div>
<div style="position:absolute;left:536px;top:447px;width:124px;height:3px;background:#fbfbfd;border:1px solid #8a96a8;border-radius:1.5px;"></div>
<div style="position:absolute;left:546px;top:448.5px;width:106px;height:0px;border-top:1px dotted #555;"></div>
<svg style="position:absolute;left:540px;top:447px" width="120" height="5"><path d="M1 1 L5 1 L3 4Z" fill="#14205a"/><path d="M114 1 L118 1 L116 4Z" fill="#14205a"/></svg>
<div style="position:absolute;left:3px;top:456px;width:1191px;height:155px;border:1px solid #e6e6e6;"></div>
<div style="position:absolute;left:5px;top:466px;width:385px;height:52px;border:1px solid #e2e2e2;"></div>
<div style="position:absolute;left:8px;top:461px;width:88px;height:10px;background:#fff;"></div>
<div class="t" style="left:10px;top:460.4px;height:12px;line-height:12px;font-size:8px;color:#111;">Servis Randevu Bilgileri</div>
<div class="t" style="right:1124px;top:475.4px;height:12px;line-height:12px;font-size:8px;color:#111;">Tarihi/Saati</div>
<div style="position:absolute;left:85px;top:474px;width:97px;height:11px;background:#fff;border:1px solid #a7a7a7;"></div>
<div class="t" style="left:88px;top:474.9px;height:12px;line-height:12px;font-size:8px;color:#111;letter-spacing:-0.2px;">11.06.2024</div>
<svg style="position:absolute;left:172px;top:475px" width="10" height="12"><rect x="0.5" y="1" width="9" height="10" rx="1.5" fill="#f8f8f4" stroke="#b8b0a0" stroke-width="0.8"/><path d="M1 5 Q1 1 5 1 Q9 1 9 5 Z" fill="#e8c060"/><path d="M3 4 L5 5 L7 3.5 M5 5 L4.5 8.5" fill="none" stroke="#222" stroke-width="1.1"/></svg>
<div style="position:absolute;left:184px;top:474px;width:24px;height:11px;background:#fff;border:1px solid #a7a7a7;border-color:#86a8d4;"></div>
<div style="position:absolute;left:206.5px;top:476px;width:0.8px;height:9px;background:#333;"></div>
<div class="t" style="left:185.5px;top:474.9px;height:12px;line-height:12px;font-size:8px;color:#111;letter-spacing:-0.2px;">12:00</div>
<div class="t" style="right:1124px;top:489.9px;height:12px;line-height:12px;font-size:8px;color:#111;">Özel Kodu</div>
<div style="position:absolute;left:85px;top:489px;width:123px;height:11px;background:#fff;border:1px solid #a7a7a7;"></div>
<div class="t" style="left:88px;top:489.9px;height:12px;line-height:12px;font-size:8px;color:#111;letter-spacing:-0.2px;">001</div>
<svg style="position:absolute;left:196px;top:490px" width="12" height="10"><rect x="0.5" y="1.5" width="10.5" height="8" rx="1.2" fill="#1e4a48"/><rect x="2.5" y="0.5" width="6" height="2" fill="#1e4a48"/><circle cx="5.8" cy="5.5" r="2.6" fill="#3a9a90"/><circle cx="5.8" cy="5.5" r="1.3" fill="#9ad8d0"/></svg>
<div class="t" style="right:1124px;top:504.4px;height:12px;line-height:12px;font-size:8px;color:#111;">Randevu Durumu</div>
<div style="position:absolute;left:85px;top:503px;width:123px;height:12px;background:#e3e3e3;border:1px solid #a7a7a7;"></div>
<div class="t" style="left:88px;top:503.9px;height:12px;line-height:12px;font-size:8px;color:#111;">Aktif</div>
<svg style="position:absolute;left:200px;top:507px" width="8" height="6"><path d="M1.5 1.5 L4 4 L6.5 1.5" fill="none" stroke="#444" stroke-width="1.1"/></svg>
<div class="t" style="right:936px;top:475.4px;height:12px;line-height:12px;font-size:8px;color:#111;">Fiş No</div>
<div style="position:absolute;left:265px;top:474px;width:124px;height:12px;background:#fff;border:1px solid #a7a7a7;"></div>
<div class="t" style="left:267px;top:474.9px;height:12px;line-height:12px;font-size:8px;color:#111;letter-spacing:-0.2px;">SRV0001</div>
<div class="t" style="right:936px;top:490.4px;height:12px;line-height:12px;font-size:8px;color:#111;">Grubu</div>
<div style="position:absolute;left:265px;top:488px;width:124px;height:12px;background:#fff;border:1px solid #a7a7a7;"></div>
<div class="t" style="left:267px;top:489.4px;height:12px;line-height:12px;font-size:7.2px;color:#111;letter-spacing:-0.2px;">GENEL</div>
<svg style="position:absolute;left:381px;top:492px" width="8" height="6"><path d="M1.5 1.5 L4 4 L6.5 1.5" fill="none" stroke="#444" stroke-width="1.1"/></svg>
<div style="position:absolute;left:8px;top:519px;width:46px;height:13px;background:#f0f0f0;border:1px solid #e0e0e0;border-bottom:none;"></div>
<div class="t" style="left:9px;top:520.9px;height:12px;line-height:12px;font-size:8px;color:#111;">Ürün Bilgileri</div>
<div class="t" style="left:58px;top:519.4px;height:12px;line-height:12px;font-size:7.6px;color:#111;letter-spacing:-0.31px;">Arıza Bilgisi ve Sorumlu Görüşü</div>
<div style="position:absolute;left:170px;top:519px;width:64px;height:13px;background:#f0f0f0;border:1px solid #e0e0e0;border-bottom:none;"></div>
<div class="t" style="left:172px;top:520.9px;height:12px;line-height:12px;font-size:8px;color:#111;">Ürün Özel Bilgileri</div>
<div style="position:absolute;left:5px;top:532px;width:386px;height:77px;border:1px solid #e4e4e4;border-top:1px solid #e4e4e4;"></div>
<div style="position:absolute;left:8px;top:538px;width:381px;height:0px;border-top:1px solid #e2e2e2;"></div>
<div style="position:absolute;left:7px;top:533px;width:97px;height:10px;background:#fff;"></div>
<div class="t" style="left:14px;top:533.1999999999999px;height:12px;line-height:12px;font-size:8px;color:#111;">Müşterinin Bildirdiği Arıza</div>
<div style="position:absolute;left:8px;top:543px;width:379px;height:24px;background:#fff;border:1px solid #a7a7a7;"></div>
<div class="t" style="left:11px;top:543.4px;height:12px;line-height:12px;font-size:7px;color:#1a1a1a;font-weight:normal;-webkit-text-stroke:0;letter-spacing:-0.27px;">Müşteri aracının incelenerek tüm bakım ve onarımının yapılması sağlanacaktır.</div>
<svg style="position:absolute;left:377px;top:545px" width="10" height="23"><path d="M2.5 5 L5 2.5 L7.5 5" fill="none" stroke="#aaa"/><path d="M2.5 18 L5 20.5 L7.5 18" fill="none" stroke="#aaa"/></svg>
<div class="t" style="left:9px;top:567.9px;height:12px;line-height:12px;font-size:8px;color:#111;">Sorumlu Görüşü</div>
<div style="position:absolute;left:8px;top:578px;width:379px;height:26px;background:#fff;border:1px solid #a7a7a7;"></div>
<div class="t" style="left:10px;top:578.4px;height:12px;line-height:12px;font-size:7px;color:#1a1a1a;font-weight:normal;-webkit-text-stroke:0;letter-spacing:-0.27px;">Araç tamamen bakıma alınacak ve değişmesi gereken parçaların değişimi sağlanacaktır.</div>
<svg style="position:absolute;left:377px;top:581px" width="10" height="24"><path d="M2.5 5 L5 2.5 L7.5 5" fill="none" stroke="#aaa"/><path d="M2.5 19 L5 21.5 L7.5 19" fill="none" stroke="#aaa"/></svg>
<div style="position:absolute;left:391px;top:471px;width:237px;height:137px;border:1px solid #e2e2e2;"></div>
<div class="t" style="left:397px;top:460.4px;height:12px;line-height:12px;font-size:8px;color:#111;">Servis İşlem Personelleri</div>
<div class="t" style="right:745px;top:474.9px;height:12px;line-height:12px;font-size:8px;color:#111;">Servis Aracı</div>
<div style="position:absolute;left:457px;top:474px;width:103px;height:12px;background:#e6e6e6;border:1px solid #a7a7a7;border-color:#bcbcbc;"></div>
<svg style="position:absolute;left:552px;top:478px" width="8" height="6"><path d="M1.5 1.5 L4 4 L6.5 1.5" fill="none" stroke="#444" stroke-width="1.1"/></svg>
<div style="position:absolute;left:564px;top:474px;width:18px;height:11px;background:#ececec;border:1px solid #a7a7a7;border-color:#cacaca;"></div>
<div style="position:absolute;left:585px;top:474px;width:18px;height:11px;background:#ececec;border:1px solid #a7a7a7;border-color:#cacaca;"></div>
<div style="position:absolute;left:606px;top:474px;width:18px;height:11px;background:#ececec;border:1px solid #a7a7a7;border-color:#cacaca;"></div>
<svg style="position:absolute;left:568px;top:474px" width="12" height="13"><path d="M4 9 L9 2.5 L10.5 4 L5.5 10Z" fill="#e8d070" stroke="#9a8a40" stroke-width="0.5"/><path d="M3 10 L5 7.5 L6.5 9 L4.5 11Z" fill="#b04a5a"/><line x1="1.5" y1="11.5" x2="10.5" y2="11.5" stroke="#222" stroke-width="1"/></svg>
<svg style="position:absolute;left:589px;top:476px" width="12" height="10"><path d="M2.5 5 L5 7.5 L9.5 3" fill="none" stroke="#4cb84c" stroke-width="2.2"/></svg>
<svg style="position:absolute;left:610px;top:475px" width="12" height="12"><circle cx="6" cy="6" r="4.8" fill="#1e4e9e" stroke="#8aa8e0" stroke-width="0.6"/><path d="M4.2 4.6 Q4.5 2.6 6.3 2.7 Q8 2.9 7.8 4.5 Q7.6 5.5 6.4 6 L6 7.6" fill="none" stroke="#e8f0ff" stroke-width="1.3"/><circle cx="5.9" cy="9" r="0.7" fill="#e8f0ff"/></svg>
<svg style="position:absolute;left:393px;top:491px" width="23" height="22" viewBox="0 0 24 23"><path d="M1.5 11 L15 3.5" stroke="#e4eaee" stroke-width="2.8" stroke-linecap="round"/>
<path d="M12.5 2.5 Q14 -0.5 18 0.8 L16 3.2 L17.5 4.8 L19.8 2.5 Q20.8 5.8 18 7 Q15.5 7.5 13.5 6 Z" fill="#eef2f4" stroke="#a8b4bc" stroke-width="0.4"/>
<circle cx="12.5" cy="11.8" r="6.2" fill="#efe08a" stroke="#c8b050" stroke-width="0.5"/>
<g fill="#efe08a"><rect x="11.3" y="4.4" width="2.4" height="2.4"/><rect x="5" y="10.6" width="2.4" height="2.4"/><rect x="17.6" y="10.6" width="2.4" height="2.4"/><rect x="11.3" y="16.8" width="2.4" height="2.4"/></g>
<ellipse cx="14" cy="10.5" rx="4" ry="3.6" fill="#1e1812"/>
<ellipse cx="13" cy="13" rx="2.7" ry="3.1" fill="#f0c4a0"/>
<path d="M10.5 15.5 Q12 18 15 16.5 L14 18.5 Q11.5 19 10.5 15.5Z" fill="#2a2018"/>
<circle cx="17.8" cy="17.8" r="3.3" fill="#56c04a" stroke="#3a9a30" stroke-width="0.5"/><circle cx="17.8" cy="17.8" r="1.2" fill="#a8e89a"/></svg>
<div style="position:absolute;left:415px;top:489px;width:213px;height:117px;background:#fff;border:1px solid #a8a8a8;"></div>
<div style="position:absolute;left:416px;top:490px;width:212px;height:11px;background:linear-gradient(#f1f1f1,#e1e1e1);border-bottom:1px solid #cfcfcf;"></div>
<div style="position:absolute;left:416px;top:490px;width:8px;height:11px;background:#fafafa;"></div>
<svg style="position:absolute;left:418px;top:491.5px" width="6" height="8"><g fill="#666"><rect x="0.5" y="1" width="1.3" height="1.3"/><rect x="3.5" y="1" width="1.3" height="1.3"/><rect x="0.5" y="5" width="1.3" height="1.3"/><rect x="3.5" y="5" width="1.3" height="1.3"/></g></svg>
<div class="t" style="left:425px;top:489.9px;height:12px;line-height:12px;font-size:8px;color:#111;">Adı Soyadı</div>
<svg style="position:absolute;left:418px;top:503px" width="5" height="8"><path d="M0.5 0.5 L4.5 4 L0.5 7.5Z" fill="#111"/></svg>
<div style="position:absolute;left:393px;top:591px;width:59px;height:15px;background:#dedede;border:1px solid #c8c8c8;"></div>
<div class="t" style="left:323px;width:200px;text-align:center;top:593.9px;height:12px;line-height:12px;font-size:8px;color:#222;">Ekle</div>
<div style="position:absolute;left:453px;top:591px;width:175px;height:15px;background:#fff;border-top:1px solid #d0d0d0;"></div>
<svg style="position:absolute;left:479.5px;top:594.5px" width="9" height="9"><circle cx="4.5" cy="4.5" r="3.6" fill="#c4c4c4" stroke="#a0a0a0" stroke-width="0.7"/><path d="M3.2 2.8 L6 4.5 L3.2 6.2Z" fill="#fafafa"/></svg>
<svg style="position:absolute;left:537.5px;top:594.5px" width="9" height="9"><circle cx="4.5" cy="4.5" r="3.6" fill="#c0c0c0" stroke="#a0a0a0" stroke-width="0.6"/><path d="M4.5 2.5 V6.5 M2.5 4.5 H6.5" stroke="#fafafa" stroke-width="1.1"/></svg>
<svg style="position:absolute;left:595.5px;top:594.5px" width="9" height="9"><circle cx="4.5" cy="4.5" r="3.6" fill="#c0c0c0" stroke="#a0a0a0" stroke-width="0.6"/><path d="M2.5 4.5 H6.5" stroke="#fafafa" stroke-width="1.3"/></svg>
<div style="position:absolute;left:5px;top:609px;width:1188px;height:1px;background:#e6e6e6;"></div>
<div style="position:absolute;left:2px;top:613px;width:1195px;height:24px;background:#f0f0f0;"></div>
<div style="position:absolute;left:3px;top:614px;width:162px;height:22px;background:#e1e1e1;border:1px solid #cfcfcf;"></div>
<div style="position:absolute;left:2px;top:637px;width:1195px;height:1px;background:#808080;"></div>
<svg style="position:absolute;left:30px;top:618px" width="17" height="17"><defs><radialGradient id="gg" cx="0.4" cy="0.35" r="0.7"><stop offset="0" stop-color="#5cc45c"/><stop offset="1" stop-color="#1e7a1e"/></radialGradient></defs><circle cx="8.3" cy="8.5" r="6.9" fill="url(#gg)" stroke="#a8e0a8" stroke-width="0.6"/><path d="M8.3 4.2 V12.8 M4 8.5 H12.6" stroke="#a8eca8" stroke-width="2.4"/></svg>
<div class="t" style="left:50px;top:620.4px;height:12px;line-height:12px;font-size:8.4px;color:#111;letter-spacing:-0.17px;">Yeni Servis Randevusu</div>
<svg style="position:absolute;left:260px;top:618px" width="16" height="16"><defs><radialGradient id="rg" cx="0.4" cy="0.35" r="0.7"><stop offset="0" stop-color="#f04a50"/><stop offset="1" stop-color="#b8141c"/></radialGradient></defs><circle cx="7.8" cy="7.3" r="6.8" fill="url(#rg)" stroke="#9a1a1a" stroke-width="0.5"/><rect x="3.6" y="6" width="8.4" height="2.6" fill="#fff"/></svg>
<svg style="position:absolute;left:461px;top:618px" width="16" height="16"><circle cx="8" cy="7.3" r="6.8" fill="url(#gg)" stroke="#a8e0a8" stroke-width="0.5"/><path d="M5.5 11 L6 5 L10.5 3.5 L10 9.5 Z" fill="#d8f4d8"/><path d="M6.5 9.5 L9.5 5" stroke="#2a8a2a" stroke-width="0.8"/></svg>
<svg style="position:absolute;left:660px;top:617px" width="19" height="15"><path d="M1.5 7.5 L6 12 L16.5 2" fill="none" stroke="#8a8a8a" stroke-width="3.6"/><path d="M1.5 7.5 L6 12 L16.5 2" fill="none" stroke="#d0d0d0" stroke-width="2.2"/></svg>
<svg style="position:absolute;left:863px;top:618px" width="16" height="16"><defs><radialGradient id="xg" cx="0.4" cy="0.35" r="0.7"><stop offset="0" stop-color="#d8d8d8"/><stop offset="1" stop-color="#8a8a8a"/></radialGradient></defs><circle cx="7.8" cy="7.3" r="6.3" fill="url(#xg)" stroke="#a0a0a0" stroke-width="0.5"/><path d="M5.3 4.8 L10.3 9.8 M10.3 4.8 L5.3 9.8" stroke="#fff" stroke-width="1.9"/></svg>
<svg style="position:absolute;left:1063px;top:617px" width="16" height="16"><circle cx="8" cy="8" r="7" fill="#3aa83a" stroke="#2a7a2a" stroke-width="0.8"/><circle cx="8" cy="8" r="5.5" fill="#4cbc4c"/><path d="M4.5 7 A3.6 3.6 0 0 1 11 6" fill="none" stroke="#f0fff0" stroke-width="1.6"/><path d="M11.5 9 A3.6 3.6 0 0 1 5 10" fill="none" stroke="#f0fff0" stroke-width="1.6"/><path d="M10 3.8 L12.6 6.4 L9.4 7Z" fill="#f0fff0"/><path d="M6 12.2 L3.4 9.6 L6.6 9Z" fill="#f0fff0"/></svg>
<svg style="position:absolute;left:1177px;top:616px" width="14" height="18"><path d="M7 1 L12.5 7.5 L9.5 7.5 L9.5 17 L4.5 17 L4.5 7.5 L1.5 7.5 Z" fill="#0e6e1a" stroke="#8ee08e" stroke-width="0.7"/><path d="M5.5 8 L5.5 16" stroke="#3aa84a" stroke-width="1"/></svg>
<div style="position:absolute;left:2px;top:638px;width:1195px;height:13px;background:#f0f0f0;"></div>
<svg style="position:absolute;left:1102px;top:644px" width="8" height="7"><path d="M4 0.5 L7.5 6.5 L0.5 6.5Z" fill="#1a3a6a"/></svg>
<div style="position:absolute;left:0px;top:651px;width:1200px;height:2px;background:#fff;"></div>
<div style="position:absolute;left:0px;top:33px;width:1px;height:617px;background:#a8acb2;"></div>
<div style="position:absolute;left:1px;top:33px;width:1px;height:617px;background:#8e949c;"></div>
<div style="position:absolute;left:1197px;top:33px;width:1px;height:617px;background:#c4d0dc;"></div>
<div style="position:absolute;left:1198px;top:33px;width:1px;height:617px;background:#6f8299;"></div>
</div></body></html>
